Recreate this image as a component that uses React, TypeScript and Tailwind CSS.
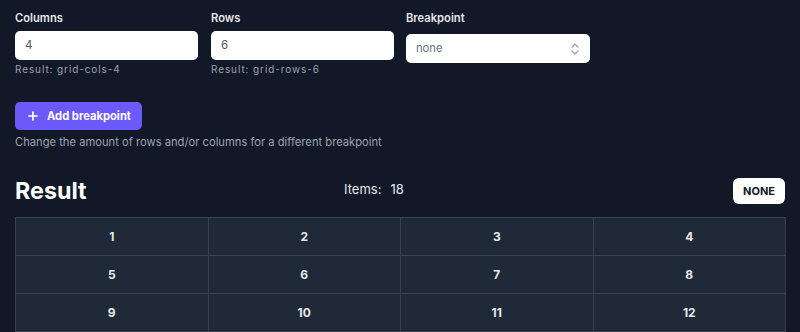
import React from "react";

const items = Array.from({ length: 18 }, (_, i) => i + 1);

export default function App() {
  return (
    <div
      className="min-h-screen bg-[#111827] px-[15px] pt-[10px] text-[#e5e7eb]"
      style={{ fontFamily: "Inter, 'Noto Sans', sans-serif" }}
    >
      <div className="flex">
        <div className="w-[183px]">
          <div className="text-[11.2px] leading-[16px] font-semibold text-[#e5e7eb]">Columns</div>
          <div className="mt-[5px] flex h-[29px] items-center rounded-[5px] bg-white px-[10px] text-[11.5px] text-[#4b5563]">
            4
          </div>
          <div className="mt-[2px] text-[10px] leading-[14px] tracking-[0.9px] text-[#9ca3af]">Result: grid-cols-4</div>
        </div>
        <div className="ml-[13px] w-[183px]">
          <div className="text-[11.2px] leading-[16px] font-semibold text-[#e5e7eb]">Rows</div>
          <div className="mt-[5px] flex h-[29px] items-center rounded-[5px] bg-white px-[10px] text-[11.5px] text-[#4b5563]">
            6
          </div>
          <div className="mt-[2px] text-[10px] leading-[14px] tracking-[0.9px] text-[#9ca3af]">Result: grid-rows-6</div>
        </div>
        <div className="ml-[12px] w-[184px]">
          <div className="text-[11.2px] leading-[16px] font-semibold text-[#e5e7eb]">Breakpoint</div>
          <div className="mt-[8px] flex h-[29px] items-center justify-between rounded-[5px] bg-white pl-[10px] pr-[10px] text-[11.2px] text-[#6b7280]">
            <span>none</span>
            <svg width="10" height="14" viewBox="0 0 10 14" fill="none" stroke="#9ca3af" strokeWidth="1.3" strokeLinecap="round" strokeLinejoin="round">
              <path d="M2 5 L5 2 L8 5" />
              <path d="M2 9 L5 12 L8 9" />
            </svg>
          </div>
        </div>
      </div>

      <button className="mt-[26px] flex h-[28px] w-[127px] items-center whitespace-nowrap rounded-[5px] bg-[#6a5af9] pl-[13px] text-[11.2px] font-bold text-white">
        <svg width="10" height="10" viewBox="0 0 10 10" fill="none" stroke="white" strokeWidth="1.7" strokeLinecap="round">
          <path d="M5 1 V9 M1 5 H9" />
        </svg>
        <span className="ml-[9px]">Add breakpoint</span>
      </button>
      <div className="mt-[4px] text-[11.2px] leading-[16px] text-[#9ca3af]">
        Change the amount of rows and/or columns for a different breakpoint
      </div>

      <div className="mt-[28px] flex h-[26px] items-start">
        <div className="w-[329px] shrink-0 text-[23.3px] leading-[26px] font-bold text-white">Result</div>
        <div className="mt-[3px] flex text-[13px] leading-[16px] text-[#e5e7eb]">
          <span>Items:</span>
          <span className="ml-[9px]">18</span>
        </div>
        <button className="ml-auto flex h-[26px] w-[52px] items-center justify-center rounded-[6px] bg-white text-[11px] font-bold text-[#111827]">
          NONE
        </button>
      </div>

      <div className="mt-[13px] grid w-[771px] grid-cols-4 gap-px border border-[#374151] bg-[#374151]">
        {items.map((n) => (
          <div
            key={n}
            className="flex h-[37px] items-center justify-center bg-[#1f2937] text-[12px] font-bold text-[#e5e7eb]"
          >
            {n}
          </div>
        ))}
      </div>
    </div>
  );
}
